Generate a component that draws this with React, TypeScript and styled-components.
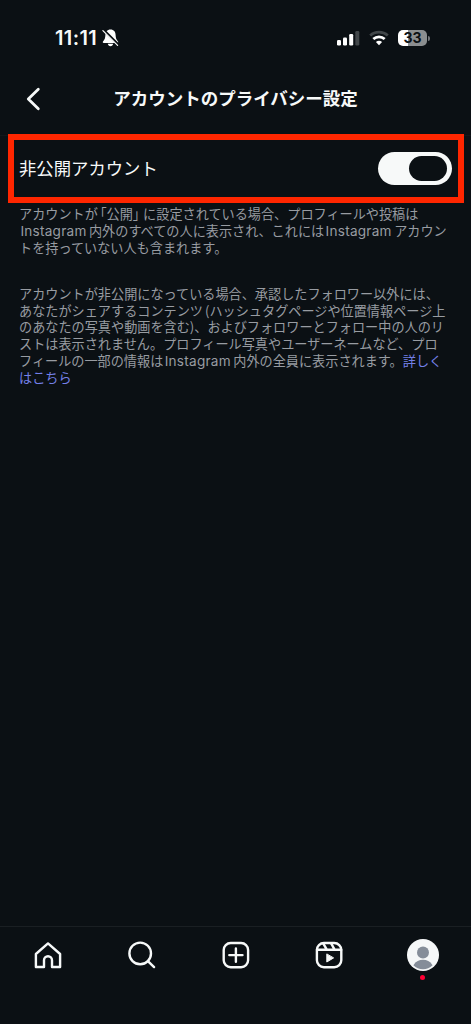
import React from 'react';
import styled, { createGlobalStyle } from 'styled-components';

const ink = '#f7f9f9';
const bg = '#0b1014';

const Global = createGlobalStyle`
  * { box-sizing: border-box; }
  body { margin: 0; background: ${bg}; }
`;

const Screen = styled.div`
  width: 471px;
  height: 1024px;
  display: flex;
  flex-direction: column;
  background: ${bg};
  color: ${ink};
  font-family: Inter, 'Noto Sans CJK JP', sans-serif;
  overflow: hidden;
`;

const StatusBar = styled.div`
  height: 76px;
  padding: 0 41px 0 55px;
  display: flex;
  justify-content: space-between;
  align-items: center;
`;

const StatusGroup = styled.div<{ $gap: number }>`
  display: flex;
  align-items: center;
  gap: ${(p) => p.$gap}px;
`;

const Clock = styled.span`
  font-size: 20px;
  line-height: 24px;
  font-weight: 600;
  letter-spacing: 0.4px;
`;

const Battery = styled.div`
  width: 29px;
  height: 16px;
  border-radius: 5px;
  background: linear-gradient(90deg, #fff 0 10px, #8b8e90 10px);
  color: ${bg};
  font-size: 14px;
  font-weight: 700;
  line-height: 16px;
  text-align: center;
`;

const BatteryTip = styled.div`
  width: 2px;
  height: 5px;
  margin-left: 1px;
  border-radius: 0 2px 2px 0;
  background: #74777a;
`;

const Header = styled.header`
  height: 60px;
  padding: 0 26px;
  display: grid;
  grid-template-columns: 44px 1fr 44px;
  align-items: center;
  border-bottom: 1px solid #12171b;
`;

const BackButton = styled.button`
  width: 16px;
  height: 24px;
  margin-top: -14px;
  padding: 0;
  border: 0;
  background: none;
  color: ${ink};
`;

const Title = styled.h1`
  margin: -16px 0 0;
  font-family: 'Noto Sans CJK JP', sans-serif;
  font-size: 17.5px;
  font-weight: 700;
  line-height: 26px;
  text-align: center;
  white-space: nowrap;
`;

const SettingRow = styled.div`
  height: 69px;
  margin: -2px 7px 0 8px;
  padding: 0 6px 0 5px;
  display: flex;
  align-items: center;
  justify-content: space-between;
  border: 6px solid #ff2600;
`;

const SettingLabel = styled.span`
  margin-top: -2px;
  font-family: 'Noto Sans CJK JP', sans-serif;
  font-size: 17.35px;
  line-height: 26px;
`;

const Toggle = styled.button`
  width: 74px;
  height: 33px;
  padding: 4px 5px;
  display: flex;
  justify-content: flex-end;
  border: 0;
  border-radius: 17px;
  background: #f7f9f9;
`;

const Knob = styled.span`
  width: 38px;
  height: 25px;
  border-radius: 13px;
  background: ${bg};
`;

const Description = styled.main`
  flex: 1;
  padding: 3px 19px 0;
  display: flex;
  flex-direction: column;
  gap: 29.5px;
`;

const Paragraph = styled.p`
  margin: 0;
  color: #989ca2;
  font-family: 'Noto Sans CJK JP', sans-serif;
  font-size: 13.15px;
  line-height: 16.8px;
`;

const Line = styled.span`
  display: block;
  white-space: nowrap;
`;

const Latin = styled.span`
  margin: 0 2.4px 0 1.4px;
  font-family: Inter, sans-serif;
  font-size: 13.6px;
  line-height: 1;
  letter-spacing: 0.24px;
`;

const Bracket = styled.span<{ $before?: number; $after?: number }>`
  margin-left: ${(p) => p.$before ?? 0}px;
  margin-right: ${(p) => p.$after ?? 0}px;
  font-feature-settings: 'halt';
`;

const MoreLink = styled.a`
  color: #7480e8;
`;

const TabBar = styled.nav`
  height: 98px;
  padding-top: 12px;
  display: grid;
  grid-template-columns: repeat(5, 93.7px);
  justify-content: center;
  align-items: start;
  border-top: 1px solid #1a1f23;
`;

const Tab = styled.button`
  height: 44px;
  padding: 0;
  display: flex;
  flex-direction: column;
  align-items: center;
  gap: 4px;
  border: 0;
  background: none;
  color: ${ink};
`;

const TabIcon = styled.svg`
  width: 30px;
  height: 30px;
  margin-top: 1px;
  fill: none;
  stroke: currentColor;
  stroke-width: 2.4;
  stroke-linejoin: round;
  stroke-linecap: round;
`;

const Avatar = styled.svg`
  width: 32px;
  height: 32px;
  flex: none;
`;

const Dot = styled.span`
  width: 5px;
  height: 5px;
  border-radius: 50%;
  background: #ff0034;
`;

const Instagram = () => <Latin>Instagram</Latin>;

export default function App() {
  return (
    <Screen>
      <Global />
      <StatusBar>
        <StatusGroup $gap={5}>
          <Clock>11:11</Clock>
          <svg width="17" height="18" viewBox="0 0 17 18">
            <path d="M8.5 .6C5.2 .6 3.5 3 3.4 6C3.3 9.3 2.7 10.4 1 12.4C.5 13.1 .8 13.9 1.7 13.9H15.3C16.2 13.9 16.5 13.1 16 12.4C14.3 10.4 13.7 9.3 13.6 6C13.5 3 11.8 .6 8.5 .6ZM5.8 14.8C6.1 16.3 7.1 17.2 8.5 17.2S10.9 16.3 11.2 14.8Z" fill="#fff" />
            <path d="M1.5 1L16.4 15.8" stroke={bg} strokeWidth="2.6" />
            <path d="M.9 1.6L15.6 16.3" stroke="#fff" strokeWidth="1.2" strokeLinecap="round" />
          </svg>
        </StatusGroup>
        <StatusGroup $gap={9}>
          <svg width="24" height="16" viewBox="0 0 24 16">
            <rect x="1" y="10" width="4" height="5.5" rx="1.2" fill="#fff" />
            <rect x="7" y="7.5" width="4" height="8" rx="1.2" fill="#fff" />
            <rect x="13.2" y="4" width="4" height="11.5" rx="1.2" fill="#fff" />
            <rect x="19.3" y="1" width="4" height="14.5" rx="1.2" fill="#42474a" />
          </svg>
          <svg width="20" height="16" viewBox="0 0 20 16">
            <g fill="none" strokeWidth="2.7">
              <path d="M1.2 5.4C6 .9 14 .9 18.8 5.4" stroke="#42474a" />
              <path d="M4.3 9.1C7.6 6 12.4 6 15.7 9.1" stroke="#fff" />
            </g>
            <path d="M6.9 12Q10 9.5 13.1 12L10 15.2Z" fill="#fff" />
          </svg>
          <StatusGroup $gap={0}>
            <Battery>33</Battery>
            <BatteryTip />
          </StatusGroup>
        </StatusGroup>
      </StatusBar>
      <Header>
        <BackButton aria-label="戻る">
          <svg width="16" height="24" viewBox="0 0 16 24" fill="none" stroke="currentColor" strokeWidth="2.8" strokeLinecap="round" strokeLinejoin="round">
            <path d="M12.3 2.3L2.3 12L12.3 21.7" />
          </svg>
        </BackButton>
        <Title>アカウントのプライバシー設定</Title>
      </Header>
      <SettingRow>
        <SettingLabel>非公開アカウント</SettingLabel>
        <Toggle role="switch" aria-checked="true" aria-label="非公開アカウント">
          <Knob />
        </Toggle>
      </SettingRow>
      <Description>
        <Paragraph>
          <Line>
            アカウントが<Bracket $before={2.1}>「</Bracket>公開<Bracket $after={3.7}>」</Bracket>に設定されている場合、プロフィールや投稿は
          </Line>
          <Line><Instagram />内外のすべての人に表示され、これには<Instagram />アカウン</Line>
          <Line>トを持っていない人も含まれます。</Line>
        </Paragraph>
        <Paragraph>
          <Line>アカウントが非公開になっている場合、承認したフォロワー以外には、</Line>
          <Line>
            あなたがシェアするコンテンツ<Bracket $before={2}>(</Bracket>ハッシュタグページや位置情報ページ上
          </Line>
          <Line>のあなたの写真や動画を含む)、およびフォロワーとフォロー中の人のリ</Line>
          <Line>ストは表示されません。プロフィール写真やユーザーネームなど、プロ</Line>
          <Line>フィールの一部の情報は<Instagram />内外の全員に表示されます。<MoreLink>詳しく</MoreLink></Line>
          <Line><MoreLink>はこちら</MoreLink></Line>
        </Paragraph>
      </Description>
      <TabBar>
        <Tab aria-label="ホーム">
          <TabIcon viewBox="0 0 30 30">
            <path d="M15 3.4L27.1 14V27H19V20.3A4 4 0 0 0 11 20.3V27H2.9V14Z" />
          </TabIcon>
        </Tab>
        <Tab aria-label="検索">
          <TabIcon viewBox="0.6 0 30 30">
            <circle cx="13.8" cy="13.4" r="10.8" />
            <path d="M21.5 21.1L27.7 27.1" />
          </TabIcon>
        </Tab>
        <Tab aria-label="作成">
          <TabIcon viewBox="0.2 0 30 30">
            <rect x="2.9" y="3" width="24.4" height="24.2" rx="7" />
            <path d="M15.1 8.5V21.7M8.5 15.1H21.7" />
          </TabIcon>
        </Tab>
        <Tab aria-label="リール">
          <TabIcon viewBox="0 0 30 30">
            <rect x="2.9" y="3" width="24.4" height="24.2" rx="7" />
            <path d="M3 9.8H27.2M9.2 3.4L12.8 9.6M17 3.2L20.6 9.6" />
            <path d="M12.8 14.3V22L19.3 18.1Z" fill="currentColor" strokeWidth="1" />
          </TabIcon>
        </Tab>
        <Tab aria-label="プロフィール">
          <Avatar viewBox="0 0 32 32">
            <circle cx="16" cy="16" r="16" fill="#f5f7f8" />
            <circle cx="16" cy="13.4" r="6" fill="#858d99" />
            <path d="M6.4 26.2C9 22.2 12.2 20.8 16 20.8S23 22.2 25.6 26.2C23 28.8 19.6 30.2 16 30.2S9 28.8 6.4 26.2Z" fill="#858d99" />
          </Avatar>
          <Dot />
        </Tab>
      </TabBar>
    </Screen>
  );
}
